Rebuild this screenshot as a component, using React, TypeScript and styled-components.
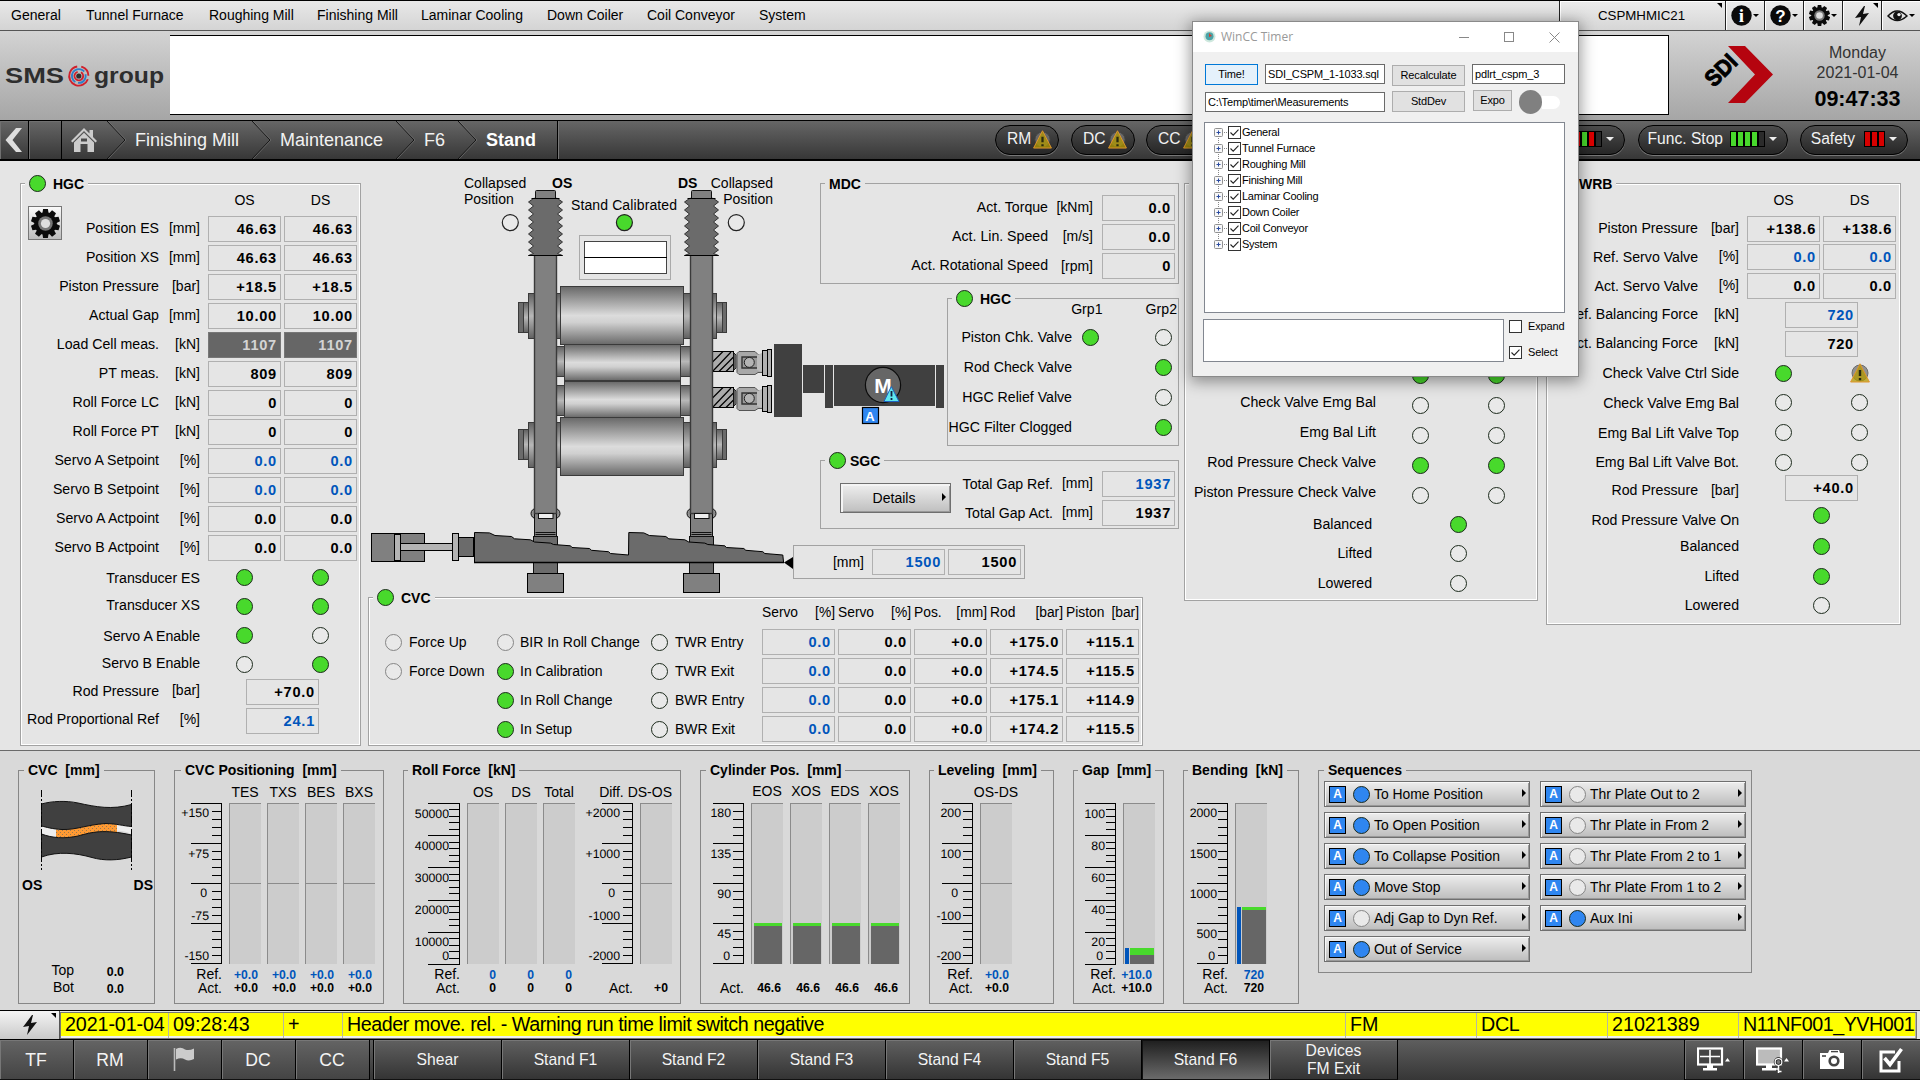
import React from "react";
import styled, { createGlobalStyle, css } from "styled-components";

const FONT = '"Liberation Sans", Arial, sans-serif';
const GREEN = "#48d92c";
const BLUE = "#0055bb";
const SKY = "#2f86f0";
const BG = "#e5e5e5";
const BG_LOW = "#d9d9d9";

const Global = createGlobalStyle`
  * { box-sizing: border-box; }
  body { margin: 0; background: ${BG}; }
  svg { display: block; flex: none; }
`;

const Screen = styled.div`
  position: relative;
  width: 1920px;
  height: 1080px;
  overflow: hidden;
  display: flex;
  flex-direction: column;
  font: 14px/16px ${FONT};
  color: #000;
  white-space: pre;
  background: ${BG};
`;

/* ---------- top menu ---------- */
const MenuBar = styled.nav`
  height: 31px;
  flex: none;
  display: flex;
  border-top: 1px solid #000;
  border-bottom: 1px solid #555;
  background: linear-gradient(#e8e8e8, #d4d4d4);
`;
const MenuItems = styled.div`
  width: 1559px;
  display: flex;
  align-items: center;
  padding: 0 0 1px 11px;
`;
const MenuItem = styled.span<{ w: number }>`
  width: ${(p) => p.w}px;
  flex: none;
`;
const MenuCell = styled.div<{ w: number }>`
  width: ${(p) => p.w}px;
  flex: none;
  display: flex;
  align-items: center;
  justify-content: center;
  border-left: 1px solid #222;
  box-shadow: inset 1px 1px 0 #fff;
  background: linear-gradient(#ececec, #d6d6d6);
  font-size: 13.3px;
`;
const Host = styled.span`
  flex: 1;
  text-align: center;
  padding-left: 6px;
`;
const Side = styled.span`
  flex: 1 1 0;
  align-self: stretch;
  display: flex;
  justify-content: flex-end;
`;
const Corner = styled.i`
  align-self: flex-start;
  margin: 2px 3px 0 0;
  border-top: 5px solid #000;
  border-left: 5px solid transparent;
`;

/* ---------- header ---------- */
const Header = styled.header`
  height: 89px;
  flex: none;
  display: flex;
  background: linear-gradient(#d3d3d3, #a6a6a6);
`;
const LogoBox = styled.div`
  width: 170px;
`;
const Banner = styled.div`
  width: 1499px;
  height: 80px;
  margin-top: 4px;
  background: #fff;
  border: solid #000;
  border-width: 1px 1px 1px 0;
`;
const Sdi = styled.div`
  width: 128px;
`;
const Clock = styled.div`
  width: 121px;
  display: flex;
  flex-direction: column;
  align-items: center;
  padding-top: 12px;
  font-size: 16px;
  line-height: 20px;
  color: #333;
`;
const Time = styled.b`
  font-size: 21.5px;
  line-height: 32px;
  color: #000;
`;

/* ---------- breadcrumb ---------- */
const Crumbs = styled.div`
  height: 41px;
  flex: none;
  display: flex;
  border-top: 1px solid #000;
  border-bottom: 2px solid #000;
  background: linear-gradient(#666, #373737);
  color: #f2f2f2;
`;
const Back = styled.div<{ w: number }>`
  width: ${(p) => p.w}px;
  border-right: 1px solid #000;
  box-shadow: inset 1px 1px 0 #707070;
  display: flex;
  align-items: center;
  justify-content: center;
`;
const Crumb = styled.div<{ w: number; pad: number; strong?: boolean }>`
  width: ${(p) => p.w}px;
  flex: none;
  padding-left: ${(p) => p.pad}px;
  display: flex;
  align-items: center;
  font-size: 18px;
  font-weight: ${(p) => (p.strong ? 700 : 400)};
  ${(p) => p.strong && css`border-right: 1px solid #000; box-shadow: 1px 0 0 #777; color: #fff;`}
`;
const Pills = styled.div`
  flex: 1;
  display: flex;
  align-items: center;
  margin-left: 437px;
`;
const Pill = styled.div<{ w: number; gap: number; end?: boolean }>`
  width: ${(p) => p.w}px;
  height: 30px;
  margin-right: ${(p) => p.gap}px;
  flex: none;
  display: flex;
  align-items: center;
  justify-content: ${(p) => (p.end ? "flex-end" : "flex-start")};
  padding: 0 10px 2px 11px;
  border: 1px solid #000;
  border-radius: 15px;
  box-shadow: 0 1px 0 #777;
  background: linear-gradient(#4c4c4c, #262626);
  font-size: 15.6px;
`;
const Segs = styled.div<{ ml?: number }>`
  display: flex;
  gap: 2px;
  margin: 0 4px 0 ${(p) => p.ml ?? 8}px;
`;
const Seg = styled.i<{ c: string }>`
  width: 5px;
  height: 14px;
  background: ${(p) => p.c};
  outline: 1px solid #000;
`;
const Down = styled.i<{ c?: string; s?: number }>`
  border: ${(p) => p.s ?? 4}px solid transparent;
  border-top-color: ${(p) => p.c ?? "#000"};
  border-bottom: 0;
  margin-left: 1px;
`;

/* ---------- generic parts ---------- */
const Panel = styled.fieldset<{ w: number; h: number; ml?: number; mt?: number; lit?: boolean; low?: boolean }>`
  width: ${(p) => p.w}px;
  height: ${(p) => p.h}px;
  margin: ${(p) => p.mt ?? 0}px 0 0 ${(p) => p.ml ?? 0}px;
  padding: 0;
  min-width: 0;
  flex: none;
  border: 1px solid ${(p) => (p.low ? "#878787" : "#a2a2a2")};
  ${(p) => p.lit && css`box-shadow: inset 0 0 0 1px #fff;`}
`;
const Legend = styled.legend<{ low?: boolean; ml?: number; gap?: number }>`
  display: flex;
  align-items: center;
  height: 17px;
  margin-left: ${(p) => p.ml ?? 4}px;
  padding: 0 4px ${(p) => (p.low ? 2 : 0)}px;
  gap: ${(p) => p.gap ?? 7}px;
  font-weight: 700;
  background: ${(p) => (p.low ? BG_LOW : BG)};
`;
const Lamp = styled.i<{ on?: boolean; dim?: boolean; c?: string }>`
  width: 17px;
  height: 17px;
  flex: none;
  border-radius: 50%;
  border: 1.4px solid ${(p) => (p.dim ? "#858585" : "#1c2a1c")};
  background: ${(p) => (p.on ? p.c ?? GREEN : "#e9e9e9")};
`;
const Body = styled.div<{ pt?: number; pr?: number }>`
  padding: ${(p) => p.pt ?? 0}px ${(p) => p.pr ?? 3}px 0 0;
`;
const Row = styled.div<{ h?: number; pb?: number }>`
  height: ${(p) => p.h ?? 29}px;
  padding-bottom: ${(p) => p.pb ?? 3}px;
  display: flex;
  align-items: center;
  justify-content: flex-end;
`;
const Label = styled.span<{ up?: number; mr?: number }>`
  margin-bottom: ${(p) => p.up ?? 3}px;
  margin-right: ${(p) => p.mr ?? 0}px;
  font-size: 14.15px;
`;
const Unit = styled.span<{ w?: number; up?: number }>`
  width: ${(p) => p.w ?? 41}px;
  margin-bottom: ${(p) => p.up ?? 3}px;
  text-align: right;
`;
const Cells = styled.div<{ w?: number; ml?: number; gap?: number }>`
  width: ${(p) => p.w ?? 149}px;
  margin-left: ${(p) => p.ml ?? 8}px;
  flex: none;
  display: flex;
  align-items: center;
  justify-content: center;
  gap: ${(p) => p.gap ?? 3}px;
`;
const Slot = styled.span`
  width: 73px;
  flex: none;
  display: flex;
  justify-content: center;
`;
const Value = styled.span<{ tone?: string }>`
  width: 73px;
  height: 26px;
  flex: none;
  display: flex;
  align-items: center;
  justify-content: flex-end;
  padding-right: 3px;
  border: 1px solid ${(p) => (p.tone === "dark" ? "#777" : "#b0b0b0")};
  background: ${(p) => (p.tone === "dark" ? "#666" : "transparent")};
  color: ${(p) => (p.tone === "dark" ? "#d4d4d4" : p.tone === "ref" ? BLUE : "#000")};
  font-weight: 700;
  font-size: 14.6px;
  letter-spacing: 0.75px;
`;
const Head = styled.div<{ h?: number }>`
  height: ${(p) => p.h ?? 24}px;
  padding-bottom: 8px;
  display: flex;
  align-items: center;
  justify-content: flex-end;
`;

/* ---------- main area ---------- */
const Main = styled.main`
  height: 589px;
  flex: none;
  display: flex;
  align-items: flex-start;
  padding: 14px 0 0 20px;
`;
const Middle = styled.section`
  width: 811px;
  margin-left: 7px;
  flex: none;
`;
const MillRow = styled.div`
  display: flex;
  height: 414px;
`;
const RightStack = styled.div`
  width: 405px;
  flex: none;
`;
const Split = styled.div<{ mt?: number }>`
  display: flex;
  margin-top: ${(p) => p.mt ?? 0}px;
`;
const Grow = styled.div`
  flex: 1;
`;
const IconButton = styled.div`
  width: 34px;
  height: 34px;
  margin: 14px 0 0 7px;
  display: flex;
  align-items: center;
  justify-content: center;
  border: 1px solid #777;
  background: linear-gradient(#fafafa, #bdbdbd);
`;
const DetailsBtn = styled.div`
  width: 111px;
  height: 30px;
  margin: 14px 0 0 19px;
  padding: 0 4px 0 0;
  display: flex;
  align-items: center;
  border: 1px solid #6f6f6f;
  box-shadow: inset 2px 2px 0 #f4f4f4, inset -1px -1px 0 #999;
  background: linear-gradient(#efefef, #bfbfbf);
`;
const BtnText = styled.span`
  flex: 1;
  text-align: center;
  padding-left: 5px;
`;
const ArrowRight = styled.i`
  border: 4px solid transparent;
  border-left: 4px solid #000;
  border-right: 0;
  margin-bottom: 2px;
`;
const GapBox = styled.div`
  width: 232px;
  height: 34px;
  margin: 16px 0 0 19px;
  padding-right: 3px;
  display: flex;
  align-items: center;
  justify-content: flex-end;
  border: 1px solid #a2a2a2;
`;
const CvcCols = styled.div`
  display: flex;
  padding-right: 3px;
`;
const CvcCol = styled.div<{ w: number; pl: number }>`
  width: ${(p) => p.w}px;
  padding: 23px 0 0 ${(p) => p.pl}px;
  flex: none;
`;
const LampRow = styled.div<{ g?: number }>`
  height: 29px;
  padding-bottom: 3px;
  display: flex;
  align-items: center;
  gap: ${(p) => p.g ?? 7}px;
`;
const CvcTable = styled.div`
  display: grid;
  grid-template-columns: repeat(5, 73px);
  grid-template-rows: 23px;
  grid-auto-rows: 29px;
  column-gap: 3px;
`;
const ColHead = styled.div`
  display: flex;
  justify-content: space-between;
  font-size: 13.8px;
  line-height: 14px;
`;

/* ---------- lower area ---------- */
const Lower = styled.section`
  height: 260px;
  flex: none;
  display: flex;
  align-items: flex-start;
  padding: 11px 0 0 18px;
  border-top: 1px solid #6b6b6b;
  background: ${BG_LOW};
`;
const Gauge = styled.div`
  display: flex;
`;
const GaugeCol = styled.div<{ w: number; ml?: number }>`
  width: ${(p) => p.w}px;
  margin-left: ${(p) => p.ml ?? 0}px;
  flex: none;
  display: flex;
  flex-direction: column;
`;
const GaugeHead = styled.div<{ end?: boolean; up?: number }>`
  height: 24px;
  padding-top: ${(p) => 5 - (p.up ?? 0)}px;
  display: flex;
  justify-content: ${(p) => (p.end ? "flex-end" : "center")};
`;
const Track = styled.div`
  height: 161px;
  display: flex;
  align-items: flex-end;
  border-left: 1px solid #8b8b8b;
  border-top: 1px solid #8b8b8b;
  background: #ccc;
`;
const ZeroTrack = styled(Track)`
  background: linear-gradient(#8b8b8b, #8b8b8b) 0 79px / 100% 1px no-repeat #ccc;
`;
const Fill = styled.i<{ cap: number; ml: number; w: number }>`
  width: ${(p) => p.w}px;
  margin-left: ${(p) => p.ml}px;
  background: #666;
  border-top: ${(p) => p.cap}px solid ${GREEN};
`;
const RefFill = styled.i`
  width: 4px;
  margin-left: 1px;
  background: ${BLUE};
`;
const Foot = styled.div<{ b?: boolean; c?: string; first?: boolean; pr?: number }>`
  height: ${(p) => (p.first ? 17 : 14)}px;
  padding: ${(p) => (p.first ? (p.b ? 4 : 3) : 0)}px ${(p) => p.pr ?? 0}px 0 0;
  display: flex;
  align-items: center;
  justify-content: flex-end;
  font-size: ${(p) => (p.b ? 12.2 : 14)}px;
  font-weight: ${(p) => (p.b ? 700 : 400)};
  color: ${(p) => p.c ?? "#000"};
`;
const CvcSides = styled.div`
  display: flex;
  justify-content: space-between;
  margin: 7px 1px 0 3px;
  font-weight: 700;
`;
const CvcVals = styled.div`
  width: 105px;
  margin-top: 70px;
  display: grid;
  grid-template-columns: 55px 50px;
  line-height: 15px;
  text-align: right;
`;
const Small = styled.b`
  font-size: 12.4px;
  padding-top: 2px;
`;
const SeqGrid = styled.div`
  display: grid;
  grid-auto-flow: column;
  grid-template-rows: repeat(6, 26px);
  grid-template-columns: 206px 206px;
  gap: 5px 10px;
  padding: 2px 0 0 5px;
`;
const SeqBtn = styled.div`
  display: flex;
  align-items: center;
  padding: 0 3px 0 4px;
  border: 1px solid #6f6f6f;
  box-shadow: inset 1px 1px 0 #f8f8f8, inset -1px -1px 0 #999;
  background: linear-gradient(#ededed, #bdbdbd);
`;
const Auto = styled.b`
  width: 17px;
  height: 17px;
  flex: none;
  display: flex;
  align-items: center;
  justify-content: center;
  margin-right: 7px;
  border: 1px solid #000;
  background: ${SKY};
  color: #fff;
  font-size: 12px;
`;
const SeqText = styled.span`
  flex: 1;
  padding-left: 4px;
  font-size: 13.9px;
`;

/* ---------- alarm line and bottom bar ---------- */
const Alarm = styled.div`
  height: 30px;
  flex: none;
  display: flex;
  border-top: 1px solid #000;
  border-bottom: 1px solid #000;
  background: #e4e4e4;
`;
const AlarmBtn = styled.div`
  width: 60px;
  display: flex;
  align-items: center;
  justify-content: center;
  border-right: 1px solid #555;
  background: linear-gradient(#f4f4f4, #c9c9c9);
`;
const AlarmLine = styled.div`
  width: 1857px;
  height: 27px;
  margin-top: 1px;
  display: flex;
  border: 1px solid #777;
  background: linear-gradient(#ff0 0 23px, #eee 23px);
`;
const AlarmCell = styled.span<{ w: number; tight?: number }>`
  width: ${(p) => p.w}px;
  flex: none;
  padding-left: 4px;
  border-right: 1px solid #b8b8a0;
  font-size: 19.7px;
  line-height: 23px;
  letter-spacing: -${(p) => p.tight ?? 0}px;
`;
const BottomBar = styled.nav`
  height: 40px;
  flex: none;
  display: flex;
  background: linear-gradient(#5e5e5e, #363636);
  color: #f4f4f4;
`;
const BarBtn = styled.div<{ w: number; active?: boolean; big?: boolean }>`
  width: ${(p) => p.w}px;
  flex: none;
  display: flex;
  align-items: center;
  justify-content: center;
  text-align: center;
  padding-right: ${(p) => (p.big ? 1 : 0)}px;
  line-height: 18px;
  font-size: ${(p) => (p.big ? 17.6 : 15.7)}px;
  border-right: 1px solid #000;
  border-bottom: 1px solid #111;
  box-shadow: inset 1px 1px 0 ${(p) => (p.active ? "#111" : "#777")};
  background: ${(p) =>
    p.active ? "linear-gradient(#1e1e1e, #6a6a6a)" : p.big ? "linear-gradient(#646464, #444)" : "linear-gradient(#606060, #343434)"};
`;
const BarGap = styled.div<{ w: number }>`
  width: ${(p) => p.w}px;
  flex: none;
  border-right: 1px solid #000;
`;

/* ---------- timer window ---------- */
const Win = styled.div`
  position: absolute;
  left: 1192px;
  top: 21px;
  width: 387px;
  height: 356px;
  border: 1px solid #8a8a8a;
  background: #f0f0f0;
  box-shadow: 0 3px 14px 2px rgba(0, 0, 0, 0.38);
  font-size: 11px;
  line-height: 13px;
  letter-spacing: -0.15px;
`;
const WinTitle = styled.div`
  height: 30px;
  padding: 0 18px 1px 10px;
  display: flex;
  align-items: center;
  background: #fff;
  color: #999;
  font-family: "Open Sans", "Noto Sans", sans-serif;
  font-size: 12px;
  letter-spacing: 0;
`;
const WinName = styled.span`
  flex: 1;
  padding-left: 5px;
`;
const WinRow = styled.div<{ mt: number }>`
  display: flex;
  align-items: flex-start;
  margin: ${(p) => p.mt}px 0 0 12px;
`;
const WinBtn = styled.span<{ w: number; ml?: number; mt?: number; hot?: boolean }>`
  width: ${(p) => p.w}px;
  height: 21px;
  margin: ${(p) => p.mt ?? 0}px 0 0 ${(p) => p.ml ?? 0}px;
  display: flex;
  align-items: center;
  justify-content: center;
  border: 1px solid ${(p) => (p.hot ? "#0078d7" : "#adadad")};
  background: ${(p) => (p.hot ? "#e5f1fb" : "#e1e1e1")};
`;
const WinInput = styled.span<{ w: number; ml?: number; mt?: number }>`
  width: ${(p) => p.w}px;
  height: 20px;
  margin: ${(p) => p.mt ?? 0}px 0 0 ${(p) => p.ml ?? 0}px;
  padding: 3px 0 0 2px;
  overflow: hidden;
  border: 1px solid #6a6a6a;
  background: #fff;
`;
const Toggle = styled.span`
  width: 41px;
  height: 24px;
  margin: 0 0 0 7px;
  display: flex;
  align-items: center;
`;
const Knob = styled.i`
  width: 24px;
  height: 24px;
  border-radius: 50%;
  background: #808080;
`;
const Rail = styled.i`
  width: 18px;
  height: 13px;
  border-radius: 0 7px 7px 0;
  background: #fff;
`;
const Tree = styled.div`
  width: 361px;
  height: 191px;
  margin: 8px 0 0 11px;
  padding: 1px 0 0 8px;
  border: 1px solid #828790;
  background: #fff;
`;
const TreeRow = styled.div`
  height: 16px;
  display: flex;
  align-items: center;
`;
const TreeText = styled.span`
  padding-left: 1px;
  letter-spacing: -0.25px;
`;
const WinFoot = styled.div`
  display: flex;
  margin: 6px 0 0 10px;
`;
const Output = styled.div`
  width: 301px;
  height: 43px;
  border: 1px solid #828790;
  background: #fff;
`;
const Checks = styled.div`
  display: flex;
  flex-direction: column;
  gap: 13px;
  padding: 1px 0 0 5px;
`;
const CheckRow = styled.div`
  height: 13px;
  display: flex;
  align-items: center;
  gap: 6px;
`;

/* ---------- icons ---------- */
const Bolt = () => (
  <svg width="18" height="22" viewBox="0 0 18 22">
    <path d="M11 1 2 13 8 12 6 21 16 8 10 9 12 1Z" fill="#111" />
  </svg>
);
const Gear = ({ s }: { s: number }) => (
  <svg width={s} height={s} viewBox="-12 -12 24 24">
    {Array.from({ length: 10 }, (_, i) => (
      <path key={i} d="M-2.7 -7.5 -2 -12H2L2.7 -7.5Z" fill="#0b0b0b" transform={`rotate(${i * 36})`} />
    ))}
    <circle r="9.3" fill="#0b0b0b" />
    <circle r="6" fill="#777" />
    <circle r="3.8" fill="#dedede" />
  </svg>
);
const Round = ({ t }: { t: string }) => (
  <svg width="21" height="21" viewBox="0 0 21 21">
    <circle cx="10.5" cy="10.5" r="10.2" fill="#0a0a0a" />
    <text x="10.5" y="16.5" textAnchor="middle" fill="#fff" fontFamily={t === "i" ? '"Liberation Serif", serif' : FONT} fontWeight="700" fontSize={t === "i" ? 19 : 17}>
      {t}
    </text>
  </svg>
);
const Eye = () => (
  <svg width="21" height="14" viewBox="0 0 21 14">
    <path d="M1 7Q10 -3 20 7 10 16 1 7Z" fill="none" stroke="#111" strokeWidth="1.5" />
    <circle cx="10.5" cy="6.8" r="4.4" fill="#111" />
    <circle cx="12" cy="5.6" r="1.7" fill="#eee" />
  </svg>
);
const Warn = ({ size = 20 }: { size?: number }) => (
  <svg width={size} height={size} viewBox="0 0 20 20">
    <circle cx="10" cy="10" r="8" fill="#777" stroke="#444" opacity="0.75" />
    <path d="M10 .8 19.4 19H.6Z" fill="#b39a00" fillOpacity="0.75" stroke="#e0962c" strokeWidth="1" />
    <path d="M10 7v6M10 15v2.2" stroke="#2a2a10" strokeWidth="2.4" />
  </svg>
);
const Check = ({ on }: { on?: boolean }) => (
  <svg width="13" height="13" viewBox="0 0 13 13">
    <rect x=".5" y=".5" width="12" height="12" fill="#fff" stroke="#333" />
    {on && <path d="M2.5 6.5 5.2 9.2 10.5 3.6" fill="none" stroke="#222" strokeWidth="1.1" />}
  </svg>
);
const Node = ({ first, last }: { first: boolean; last: boolean }) => (
  <svg width="15" height="16" viewBox="0 0 15 16">
    <path d={`M5.5 ${first ? 8 : 0}V${last ? 8 : 16}M9 8.5H15`} stroke="#888" strokeDasharray="1 1" fill="none" />
    <rect x="1.5" y="4.5" width="8" height="8" fill="#f8f8f8" stroke="#919191" rx="1" />
    <path d="M3.5 8.5h4M5.5 6.5v4" stroke="#2a4ba0" />
  </svg>
);
const Chevron = () => (
  <svg width="19" height="38" viewBox="0 0 19 38">
    <path d="M0 0 18 19 0 38" fill="none" stroke="#151515" strokeWidth="1" />
    <path d="M1.2 0 19 19 1.2 38" fill="none" stroke="#7a7a7a" strokeWidth=".6" />
  </svg>
);
const Monitor = ({ split }: { split?: boolean }) => (
  <svg width="34" height="26" viewBox="0 0 34 26">
    <rect x="1" y="1.5" width="24" height="16" fill={split ? "#444" : "#bbb"} stroke="#fff" strokeWidth="2.2" />
    {split && <path d="M13 3v14M3 9.5h20" stroke="#fff" strokeWidth="1.6" />}
    <path d="M10 18h6v3h4v2.5H6V21h4Z" fill="#fff" />
    <path d="M28 14.5 30.5 11 33 14.5Z" fill="#fff" />
    {!split && (
      <g>
        <circle cx="22.5" cy="15" r="3.4" fill="#777" stroke="#111" strokeWidth="2.6" />
        <circle cx="22.5" cy="15" r="3.4" fill="none" stroke="#fff" strokeWidth="1.3" />
        <path d="M22.5 18.4V26M22.5 22h-3M22.5 24.5h3" stroke="#fff" strokeWidth="1.5" />
      </g>
    )}
  </svg>
);
const Camera = () => (
  <svg width="26" height="21" viewBox="0 0 26 21">
    <path d="M1 4H9L10.5 1H20L21 4H25V20H1Z" fill="#fff" />
    <path d="M12 2.6h7" stroke="#444" strokeWidth="1.4" />
    <circle cx="15" cy="12" r="5.6" fill="#444" />
    <circle cx="15" cy="12" r="3" fill="#fff" />
    <path d="M3 7h4" stroke="#444" strokeWidth="1.6" />
  </svg>
);
const TaskCheck = () => (
  <svg width="26" height="26" viewBox="0 0 26 26">
    <path d="M17 5H3V24H21V14" fill="none" stroke="#fff" strokeWidth="3" />
    <path d="M6.5 11 12 17.5 23.5 2" fill="none" stroke="#fff" strokeWidth="3.6" />
  </svg>
);

/* ---------- mill drawing ---------- */
const Stroke = { stroke: "#3a3a3a", strokeWidth: 1 };

const Roll = ({ y, h, x = 560, w = 124, neck, stub }: { y: number; h: number; x?: number; w?: number; neck: [number, number]; stub?: [number, number] }) => (
  <g {...Stroke}>
    {stub && (
      <>
        <rect x="518.5" y={stub[0]} width="208" height={stub[1]} fill="url(#neck)" />
        <rect x="518.5" y={stub[0]} width="5" height={stub[1]} fill="#6b6b6b" />
        <rect x="722.5" y={stub[0]} width="4" height={stub[1]} fill="#6b6b6b" />
      </>
    )}
    <rect x={stub ? 528.5 : 556.5} y={neck[0]} width={stub ? 188 : 134} height={neck[1]} fill="url(#neck)" />
    <rect x={x + 0.5} y={y} width={w - 1} height={h} fill="url(#roll)" />
  </g>
);

const teeth = (x: number) => {
  let d = `M${x - 1} 198.5L${x - 6} 202`;
  for (let i = 0; i < 6; i++) d += `L${x - 1} ${206 + i * 8}L${x - 6} ${210 + i * 8}`;
  d += `L${x - 1} 253.5L${x - 6} 255.5H${x + 28}L${x + 23} 253.5`;
  for (let i = 5; i >= 0; i--) d += `L${x + 28} ${210 + i * 8}L${x + 23} ${206 + i * 8}`;
  return d + `L${x + 28} 202L${x + 23} 198.5Z`;
};

const Post = ({ x }: { x: number }) => (
  <g stroke="#111" strokeWidth="1">
    <circle cx={x + 1.5} cy="513.5" r="5" fill="#909090" />
    <circle cx={x + 20.5} cy="513.5" r="5" fill="#909090" />
    <rect x={x - 1} y="536.5" width="24" height="37" fill="#6b6b6b" />
    <rect x={x} y="513.5" width="22" height="23" fill="#808080" />
    <rect x={x} y="198.5" width="22" height="315" fill="#808080" stroke="#3a3a3a" strokeWidth="1.4" />
    <rect x={x + 4} y="513.5" width="14.5" height="5" fill="#eee" />
    <path d={`M${x + 1} 532.5h20M${x + 1} 534.5h20`} />
    <rect x={x + 1} y="190.5" width="20" height="9" rx="1" fill="#808080" />
    <path d={teeth(x)} fill="#6b6b6b" stroke="#333" />
    <path d={`M${x - 3} 198.5h28M${x - 6} 255.5h34`} stroke="#000" />
    <rect x={x - 7} y="573.5" width="36" height="19" fill="#808080" stroke="#000" />
  </g>
);

const wedge = (x: number) =>
  [[0, 0], [15, 0.4], [20.5, 3], [37, 4], [40, 6.3], [56, 7.3], [60, 9.5], [76, 10.6], [79, 12], [96, 13.3], [97.5, 15], [115, 16], [117, 17.8], [134, 19.2], [136, 21], [154, 22.5]]
    .map(([a, b]) => `L${x + a} ${532.5 + b}`)
    .join("");

const Spindle = ({ y }: { y: number }) => (
  <g transform={`translate(0 ${y})`} stroke="#222">
    <rect x="712.5" y="351.5" width="21" height="20" fill="#ababab" stroke="#000" />
    <path d="M712.5 362 723 351.5M712.5 371.5 731 352M719 371.5 733.5 357M726 371.5 733.5 364" stroke="#000" strokeWidth="1.2" />
    <path d="M734 353v17l2-2v-13Z" fill="#999" />
    <path d="M739 351.5h16l3 3h4v18h-4l-3 2h-16l-2-2v-19Z" fill="#a8a8a8" stroke="#555" />
    <path d="M757 357h-15v11h15" fill="#999" stroke="#333" strokeWidth="1.4" />
    <circle cx="749.3" cy="362.4" r="5" fill="#b4b4b4" />
    <path d="M757 355l5-2v19l-5-2Z" fill="#bbb" stroke="none" />
    <rect x="762.5" y="350.5" width="5" height="25" fill="#b0b0b0" stroke="#000" />
    <rect x="767.5" y="349.5" width="4" height="27" fill="#b0b0b0" stroke="#000" />
  </g>
);

const Mill = () => (
  <svg width="406" height="413" viewBox="368 175 406 413" overflow="visible" fontFamily={FONT} fontSize="14">
    <defs>
      <linearGradient id="roll" x2="0" y2="1">
        <stop offset="0" stopColor="#686868" />
        <stop offset=".15" stopColor="#8a8a8a" />
        <stop offset=".5" stopColor="#dcdcdc" />
        <stop offset=".62" stopColor="#d0d0d0" />
        <stop offset="1" stopColor="#686868" />
      </linearGradient>
      <linearGradient id="neck" x2="0" y2="1">
        <stop offset="0" stopColor="#606060" />
        <stop offset=".5" stopColor="#b8b8b8" />
        <stop offset="1" stopColor="#606060" />
      </linearGradient>
    </defs>
    <text x="464" y="188">Collapsed</text>
    <text x="464" y="204">Position</text>
    <text x="773" y="188" textAnchor="end">Collapsed</text>
    <text x="773" y="204" textAnchor="end">Position</text>
    <text x="552" y="188" fontWeight="700">OS</text>
    <text x="678" y="188" fontWeight="700">DS</text>
    <text x="571" y="210" textLength="106">Stand Calibrated</text>
    <g stroke="#222" strokeWidth="1.2" fill="#e9e9e9">
      <circle cx="510.3" cy="222.6" r="8" />
      <circle cx="736.3" cy="222.6" r="8" />
      <circle cx="624.4" cy="222.6" r="8" fill={GREEN} />
    </g>
    <rect x="579.5" y="235.5" width="91" height="44" fill="none" stroke="#aaa" />
    <rect x="584.5" y="241.5" width="82" height="32" fill="#fff" stroke="#444" />
    <path d="M584 257.5h83" stroke="#000" />
    <Roll y={286.5} h={58} neck={[293.5, 45]} stub={[302.5, 30]} />
    <Roll y={344.5} h={36} x={564} w={117} neck={[346.5, 30]} />
    <Roll y={381.5} h={36} x={564} w={117} neck={[385.5, 30]} />
    <Roll y={417.5} h={58} neck={[422.5, 45]} stub={[429.5, 30]} />
    <Spindle y={0} />
    <Spindle y={36} />
    <Post x={534.5} />
    <Post x={690.5} />
    <path d={`M474.5 562.5${wedge(474.5)}${wedge(628.8)}L783.6 562.5Z`} fill="#6b6b6b" stroke="#000" />
    <path d="M474 562.5h310" stroke="#000" strokeWidth="1.4" />
    <path d="M784 562.5 793 557v12Z" fill="#000" />
    <g stroke="#000">
      <rect x="371.5" y="533.5" width="53" height="28" fill="#808080" />
      <rect x="400.5" y="543.5" width="52" height="7" fill="#b4b4b4" />
      <rect x="394.5" y="534.5" width="6" height="26" fill="#b4b4b4" />
      <rect x="452.5" y="533.5" width="6" height="27" fill="#b4b4b4" />
      <rect x="458.5" y="537.5" width="15" height="19" fill="#6b6b6b" />
    </g>
  </svg>
);

const Drive = () => (
  <svg width="173" height="156" viewBox="774 290 173 156" fontFamily={FONT} fontWeight="700">
    <g fill="#404040">
      <rect x="774" y="344" width="28" height="73" />
      <rect x="803" y="365" width="21" height="28" />
      <rect x="825" y="365" width="8" height="43" />
      <rect x="834" y="365" width="101" height="41" />
      <rect x="936" y="365" width="8" height="43" />
    </g>
    <circle cx="883" cy="385" r="17.6" fill="#666" stroke="#0c0c0c" strokeWidth="1.2" />
    <text x="883" y="392.5" textAnchor="middle" fontSize="21" fill="#fff">M</text>
    <path d="M891.3 386.5 899 401.5H884Z" fill="#5ee6ee" stroke="#1d62c0" />
    <path d="M891.5 391v5.5M891.5 398v2" stroke="#124" strokeWidth="1.8" />
    <rect x="862.5" y="407.5" width="16" height="16" fill={SKY} stroke="#000" strokeWidth="1.2" />
    <text x="870" y="420.5" textAnchor="middle" fontSize="13" fill="#fff">A</text>
  </svg>
);

/* ---------- composed parts ---------- */
type Cell = string | boolean | "warn";
const cellsOf = (v: Cell[], tone?: string) =>
  v.map((c, i) =>
    typeof c === "string" && c !== "warn" ? (
      <Value key={i} tone={tone}>{c}</Value>
    ) : (
      <Slot key={i}>{c === "warn" ? <Warn size={20} /> : <Lamp on={c as boolean} />}</Slot>
    )
  );

interface LineProps { label: string; unit?: string; v: Cell[]; tone?: string; h?: number; uw?: number; cw?: number; ml?: number; up?: number; uup?: number; pb?: number }
const Line = ({ label, unit, v, tone, h, uw, cw, ml, up, uup, pb }: LineProps) => (
  <Row h={h} pb={pb}>
    <Label up={up}>{label}</Label>
    {unit && <Unit w={uw} up={uup}>{unit}</Unit>}
    <Cells w={cw} ml={ml}>{cellsOf(v, tone)}</Cells>
  </Row>
);
const SideHeads = () => (
  <Head>
    <Cells><Slot>OS</Slot><Slot>DS</Slot></Cells>
  </Head>
);

const hgcLines: LineProps[] = [
  { label: "Piston Pressure", unit: "[bar]", v: ["+18.5", "+18.5"] },
  { label: "Actual Gap", unit: "[mm]", v: ["10.00", "10.00"] },
  { label: "Load Cell meas.", unit: "[kN]", v: ["1107", "1107"], tone: "dark" },
  { label: "PT meas.", unit: "[kN]", v: ["809", "809"] },
  { label: "Roll Force LC", unit: "[kN]", v: ["0", "0"] },
  { label: "Roll Force PT", unit: "[kN]", v: ["0", "0"] },
  { label: "Servo A Setpoint", unit: "[%]", v: ["0.0", "0.0"], tone: "ref" },
  { label: "Servo B Setpoint", unit: "[%]", v: ["0.0", "0.0"], tone: "ref" },
  { label: "Servo A Actpoint", unit: "[%]", v: ["0.0", "0.0"] },
  { label: "Servo B Actpoint", unit: "[%]", v: ["0.0", "0.0"] },
  { label: "Transducer ES", v: [true, true], up: 0, pb: 2 },
  { label: "Transducer XS", v: [true, true], up: 4, pb: 2 },
  { label: "Servo A Enable", v: [true, false], up: -1 },
  { label: "Servo B Enable", v: [false, true], up: 2 },
  { label: "Rod Pressure", unit: "[bar]", v: ["+70.0"], pb: 5, up: 2, uup: 5 },
  { label: "Rod Proportional Ref", unit: "[%]", v: ["24.1"], tone: "ref", pb: 5, up: 4, uup: 5 },
];

const balLines: LineProps[] = [
  { label: "Check Valve Ctrl Side", v: [true, true] },
  { label: "Check Valve Emg Bal", v: [false, false] },
  { label: "Emg Bal Lift", v: [false, false] },
  { label: "Rod Pressure Check Valve", v: [true, true] },
  { label: "Piston Pressure Check Valve", v: [false, false] },
];

const wrbLines: LineProps[] = [
  { label: "Piston Pressure", unit: "[bar]", v: ["+138.6", "+138.6"], h: 28, pb: 2 },
  { label: "Ref. Servo Valve", unit: "[%]", v: ["0.0", "0.0"], tone: "ref", up: 1, uup: 2 },
  { label: "Act. Servo Valve", unit: "[%]", v: ["0.0", "0.0"], up: 1, uup: 2 },
  { label: "Ref. Balancing Force", unit: "[kN]", v: ["720"], tone: "ref" },
  { label: "Act. Balancing Force", unit: "[kN]", v: ["720"] },
  { label: "Check Valve Ctrl Side", v: [true, "warn"], h: 29, pb: 3, up: 1 },
  { label: "Check Valve Emg Bal", v: [false, false], h: 30, up: 0 },
  { label: "Emg Bal Lift Valve Top", v: [false, false], h: 30, up: 0 },
  { label: "Emg Bal Lift Valve Bot.", v: [false, false], h: 26, pb: 0, up: 0 },
];

interface ScaleProps { five?: boolean; labels: [number, string, number?][]; w?: number; minor?: number; gap?: number }
const Scale = ({ five, labels, w = 31, minor = 10, gap = 13 }: ScaleProps) => {
  const step = five ? 6.44 : 8;
  const n = five ? 25 : 20;
  return (
    <svg width={w} height="161" overflow="visible" shapeRendering="crispEdges" fontFamily={FONT} fontSize="12.3">
      <rect x={w - 1} y="0" width="1" height={Math.round(n * step) + 1} />
      {Array.from({ length: n + 1 }, (_, i) => {
        const len = i % 5 === 0 ? w : minor;
        return <rect key={i} x={w - len} y={Math.round(i * step)} width={len} height="1" />;
      })}
      {labels.map(([y, t, dx = 0]) => (
        <text key={t} x={w - gap - dx} y={y - 803 + 3.8} textAnchor="end" textRendering="geometricPrecision">{t}</text>
      ))}
    </svg>
  );
};

interface Bar { head?: string; ml: number; zero?: boolean; ref?: string; act: string; fill?: React.ReactNode; end?: boolean; pr?: number }
const Bars = ({ bars, up }: { bars: Bar[]; up?: number }) => (
  <>
    {bars.map((b, i) => {
      const T = b.zero ? ZeroTrack : Track;
      return (
        <GaugeCol key={i} w={32} ml={b.ml}>
          <GaugeHead end={b.end} up={up}>{b.head}</GaugeHead>
          <T>{b.fill}</T>
          <Foot first b c={BLUE} pr={b.pr ?? 3}>{b.ref}</Foot>
          <Foot b pr={b.pr ?? 3}>{b.act}</Foot>
        </GaugeCol>
      );
    })}
  </>
);
const ScaleCol = ({ ml, noRef, ...s }: ScaleProps & { ml: number; noRef?: boolean }) => (
  <GaugeCol w={s.w ?? 31} ml={ml}>
    <GaugeHead />
    <Scale {...s} />
    <Foot first>{noRef ? "" : "Ref."}</Foot>
    <Foot>Act.</Foot>
  </GaugeCol>
);
const LowPanel = ({ title, w, ml, h = 242, tl = 4, children }: { title: string; w: number; ml?: number; h?: number; tl?: number; children: React.ReactNode }) => (
  <Panel w={w} h={h} ml={ml} low>
    <Legend low ml={tl}>{title}</Legend>
    {children}
  </Panel>
);

const cylFill = <Fill w={28} ml={2} cap={3} style={{ height: 41 }} />;
const seqs: [string, boolean][] = [
  ["To Home Position", true], ["To Open Position", true], ["To Collapse Position", true], ["Move Stop", true],
  ["Adj Gap to Dyn Ref.", false], ["Out of Service", true], ["Thr Plate Out to 2", false], ["Thr Plate in From 2", false],
  ["Thr Plate From 2 to 1", false], ["Thr Plate From 1 to 2", false], ["Aux Ini", true],
];
const cvcRows = [
  ["0.0", "0.0", "+0.0", "+175.0", "+115.1"],
  ["0.0", "0.0", "+0.0", "+174.5", "+115.5"],
  ["0.0", "0.0", "+0.0", "+175.1", "+114.9"],
  ["0.0", "0.0", "+0.0", "+174.2", "+115.5"],
];
const treeItems = ["General", "Tunnel Furnace", "Roughing Mill", "Finishing Mill", "Laminar Cooling", "Down Coiler", "Coil Conveyor", "System"];

const TimerWindow = () => (
  <Win>
    <WinTitle>
      <svg width="13" height="13" viewBox="0 0 13 13">
        <circle cx="6.5" cy="6.5" r="6" fill="#cfe8de" />
        <circle cx="6.5" cy="6.3" r="4" fill="#4aa3a8" />
        <path d="M6 3l3 3-3 1Z" fill="#c43" />
      </svg>
      <WinName>WinCC Timer</WinName>
      <svg width="101" height="12" viewBox="0 0 101 12" fill="none" stroke="#888">
        <path d="M0 6.5h10M90.5 1.5l10 10M100.5 1.5l-10 10" />
        <rect x="45.5" y="1.5" width="9" height="9" />
      </svg>
    </WinTitle>
    <WinRow mt={12}>
      <WinBtn w={53} hot>Time!</WinBtn>
      <WinInput w={120} ml={7}>SDI_CSPM_1-1033.sql</WinInput>
      <WinBtn w={73} ml={7} mt={1}>Recalculate</WinBtn>
      <WinInput w={93} ml={7}>pdlrt_cspm_3</WinInput>
    </WinRow>
    <WinRow mt={4}>
      <WinInput w={180} mt={2}>C:\Temp\timer\Measurements</WinInput>
      <WinBtn w={73} ml={7} mt={1}>StdDev</WinBtn>
      <WinBtn w={39} ml={8}>Expo</WinBtn>
      <Toggle><Knob /><Rail /></Toggle>
    </WinRow>
    <Tree>
      {treeItems.map((t, i) => (
        <TreeRow key={t}>
          <Node first={i === 0} last={i === treeItems.length - 1} />
          <Check on />
          <TreeText>{t}</TreeText>
        </TreeRow>
      ))}
    </Tree>
    <WinFoot>
      <Output />
      <Checks>
        <CheckRow><Check />Expand</CheckRow>
        <CheckRow><Check on />Select</CheckRow>
      </Checks>
    </WinFoot>
  </Win>
);

export default function App() {
  return (
    <>
      <Global />
      <Screen>
        <MenuBar>
          <MenuItems>
            <MenuItem w={75}>General</MenuItem>
            <MenuItem w={123}>Tunnel Furnace</MenuItem>
            <MenuItem w={108}>Roughing Mill</MenuItem>
            <MenuItem w={104}>Finishing Mill</MenuItem>
            <MenuItem w={126}>Laminar Cooling</MenuItem>
            <MenuItem w={100}>Down Coiler</MenuItem>
            <MenuItem w={112}>Coil Conveyor</MenuItem>
            <MenuItem w={60}>System</MenuItem>
          </MenuItems>
          <MenuCell w={166}><Host>CSPMHMIC21</Host><Corner /></MenuCell>
          <MenuCell w={39}><Round t="i" /><Down s={3.5} /></MenuCell>
          <MenuCell w={39}><Round t="?" /><Down s={3.5} /></MenuCell>
          <MenuCell w={39}><Gear s={21} /><Down s={3.5} /></MenuCell>
          <MenuCell w={39}><Side /><Bolt /><Side><Corner /></Side></MenuCell>
          <MenuCell w={39}><Eye /><Down s={3.5} /></MenuCell>
        </MenuBar>

        <Header>
          <LogoBox>
            <svg width="170" height="89" viewBox="0 31 170 89" fontFamily={FONT} fontWeight="700" fill="#2e2e2e">
              <text x="5" y="83" fontSize="21.5" textLength="59" lengthAdjust="spacingAndGlyphs">SMS</text>
              <g fill="none" strokeWidth="1.9">
                <circle cx="78.8" cy="76" r="9.6" stroke="#d0202c" strokeDasharray="40 4 12.300 4" transform="rotate(20 78.8 76)" />
                <circle cx="78.8" cy="76" r="6.9" stroke="#2f7fc8" strokeDasharray="24 3 13.300 3" transform="rotate(120 78.8 76)" />
                <circle cx="78.8" cy="76" r="4.3" stroke="#d0202c" strokeDasharray="23 4" transform="rotate(-60 78.8 76)" />
              </g>
              <circle cx="78.8" cy="76" r="2.6" />
              <text x="94" y="83" fontSize="22" textLength="70" lengthAdjust="spacingAndGlyphs">group</text>
            </svg>
          </LogoBox>
          <Banner />
          <Sdi>
            <svg width="128" height="89" viewBox="1669 31 128 89">
              <path d="M1728 46h17l28 28.5-28 28.5h-17l27-28.5Z" fill="#b5040f" />
              <text transform="translate(1720.8 70) rotate(-45)" textAnchor="middle" y="8" fontFamily={FONT} fontWeight="700" fontSize="23" stroke="#000" strokeWidth="1" textLength="35" lengthAdjust="spacingAndGlyphs">SDI</text>
            </svg>
          </Sdi>
          <Clock>
            <span>Monday</span>
            <span>2021-01-04</span>
            <Time>09:47:33</Time>
          </Clock>
        </Header>

        <Crumbs>
          <Back w={29}>
            <svg width="20" height="26" viewBox="0 0 20 26"><path d="M12 1h6L8.5 13 18 25h-6L1.5 13Z" fill="#ddd" /></svg>
          </Back>
          <Back w={33} />
          <Crumb w={45} pad={9}>
            <svg width="26" height="26" viewBox="0 0 26 26" fill="#ccc">
              <path d="M13 1 0 14l1.5 1.5L13 4l11.5 11.5L26 14l-4-4V3h-3.5v3.5Z" />
              <path d="M3 15.5 13 5.8l10 9.7V25h-6.5v-8h-7v8H3Z" />
              <path d="M10 11.5h6v3h-6Z" fill="#4a4a4a" />
            </svg>
          </Crumb>
          <Chevron />
          <Crumb w={126} pad={9}>Finishing Mill</Crumb>
          <Chevron />
          <Crumb w={125} pad={9}>Maintenance</Crumb>
          <Chevron />
          <Crumb w={43} pad={9}>F6</Crumb>
          <Chevron />
          <Crumb w={81} pad={9} strong>Stand</Crumb>
          <Pills>
            <Pill w={64} gap={12}>RM<svg width="2" height="1" /><Warn size={19} /></Pill>
            <Pill w={64} gap={11}>DC<svg width="2" height="1" /><Warn size={19} /></Pill>
            <Pill w={64} gap={195}>CC<svg width="2" height="1" /><Warn size={19} /></Pill>
            <Pill w={220} gap={13} end>
              <Segs>{["#d00", GREEN, "#d00", "#2b2b2b"].map((c, i) => <Seg key={i} c={c} />)}</Segs><Down c="#eee" />
            </Pill>
            <Pill w={150} gap={12} end>
              Func. Stop<Segs>{[GREEN, GREEN, GREEN, GREEN, "#2b2b2b"].map((c, i) => <Seg key={i} c={c} />)}</Segs><Down c="#eee" />
            </Pill>
            <Pill w={108} gap={12} end>
              Safety<Segs ml={10}>{[1, 2, 3].map((i) => <Seg key={i} c="#d80000" />)}</Segs><Down c="#eee" />
            </Pill>
          </Pills>
        </Crumbs>

        <Main>
          <Panel w={341} h={571} lit>
            <Legend><Lamp on />HGC</Legend>
            <Split>
              <IconButton><Gear s={29} /></IconButton>
              <Grow>
                <Body>
                  <SideHeads />
                  <Line label="Position ES" unit="[mm]" v={["46.63", "46.63"]} />
                  <Line label="Position XS" unit="[mm]" v={["46.63", "46.63"]} />
                </Body>
              </Grow>
            </Split>
            <Body>{hgcLines.map((l) => <Line key={l.label} {...l} />)}</Body>
          </Panel>

          <Middle>
            <MillRow>
              <Mill />
              <RightStack>
                <Panel w={359} h={109} ml={46}>
                  <Legend>MDC</Legend>
                  <Body pt={3}>
                    <Line label="Act. Torque" unit="[kNm]" v={["0.0"]} uw={45} cw={73} ml={9} />
                    <Line label="Act. Lin. Speed" unit="[m/s]" v={["0.0"]} uw={45} cw={73} ml={9} />
                    <Line label="Act. Rotational Speed" unit="[rpm]" v={["0"]} uw={45} cw={73} ml={9} uup={1} />
                  </Body>
                </Panel>
                <Split mt={6}>
                  <Drive />
                  <Panel w={232} h={156}>
                    <Legend><Lamp on />HGC</Legend>
                    <Head h={8}><Label mr={43} up={-3}>Grp1</Label><Label mr={1} up={-3}>Grp2</Label></Head>
                    <Body pt={7} pr={6}>
                      {([["Piston Chk. Valve", true, false], ["Rod Check Valve", null, true], ["HGC Relief Valve", null, false], ["HGC Filter Clogged", null, true]] as [string, boolean | null, boolean][]).map(([t, a, b]) => (
                        <Row key={t} h={30} pb={0}>
                          <Label up={1}>{t}</Label>
                          <Cells w={90} ml={10} gap={56}>
                            {a === null ? <svg width="17" height="1" /> : <Lamp on={a} />}
                            <Lamp on={b} />
                          </Cells>
                        </Row>
                      ))}
                    </Body>
                  </Panel>
                </Split>
                <Panel w={359} h={77} ml={46} mt={6}>
                  <Legend gap={4}><Lamp on />SGC</Legend>
                  <Split>
                    <DetailsBtn><BtnText>Details</BtnText><ArrowRight /></DetailsBtn>
                    <Grow>
                      <Body pt={2}>
                        <Line label="Total Gap Ref." unit="[mm]" v={["1937"]} tone="ref" uw={40} cw={73} ml={9} up={0} />
                        <Line label="Total Gap Act." unit="[mm]" v={["1937"]} uw={40} cw={73} ml={9} up={0} />
                      </Body>
                    </Grow>
                  </Split>
                </Panel>
                <GapBox>
                  <span>[mm]</span>
                  <Cells><Value tone="ref">1500</Value><Value>1500</Value></Cells>
                </GapBox>
              </RightStack>
            </MillRow>
            <Panel w={775} h={157} lit>
              <Legend><Lamp on />CVC</Legend>
              <CvcCols>
                <CvcCol w={112} pl={16}>
                  <LampRow><Lamp dim />Force Up</LampRow>
                  <LampRow><Lamp dim />Force Down</LampRow>
                </CvcCol>
                <CvcCol w={154} pl={16}>
                  <LampRow g={6}><Lamp dim />BIR In Roll Change</LampRow>
                  <LampRow g={6}><Lamp on />In Calibration</LampRow>
                  <LampRow g={6}><Lamp on />In Roll Change</LampRow>
                  <LampRow g={6}><Lamp on />In Setup</LampRow>
                </CvcCol>
                <CvcCol w={127} pl={16}>
                  {["TWR Entry", "TWR Exit", "BWR Entry", "BWR Exit"].map((t) => <LampRow key={t}><Lamp />{t}</LampRow>)}
                </CvcCol>
                <CvcTable>
                  {[["Servo", "[%]"], ["Servo", "[%]"], ["Pos.", "[mm]"], ["Rod", "[bar]"], ["Piston", "[bar]"]].map(([a, b], i) => (
                    <ColHead key={i}><span>{a}</span><span>{b}</span></ColHead>
                  ))}
                  {cvcRows.flatMap((r, y) => r.map((v, x) => <Value key={`${y}-${x}`} tone={x === 0 ? "ref" : undefined}>{v}</Value>))}
                </CvcTable>
              </CvcCols>
            </Panel>
          </Middle>

          <Panel w={354} h={426} ml={5} lit>
            <Legend><Lamp on />BRB</Legend>
            <Body pt={168} pr={4}>
              {balLines.map((l) => <Line key={l.label} {...l} h={30} pb={0} up={6} />)}
              <Line label="Balanced" v={[true]} h={28} pb={0} ml={12} up={0} />
              <Line label="Lifted" v={[false]} h={32} pb={1} ml={12} up={2} />
              <Line label="Lowered" v={[false]} h={28} pb={1} ml={12} up={2} />
            </Body>
          </Panel>

          <Panel w={355} h={450} ml={8} lit>
            <Legend><Lamp on />WRB</Legend>
            <Body pr={4}>
              <SideHeads />
              {wrbLines.map((l) => <Line key={l.label} {...l} />)}
              <Row h={26} pb={1}>
                <Label up={-4}>Rod Pressure</Label>
                <Unit up={-4}>[bar]</Unit>
                <Cells><Value>+40.0</Value></Cells>
              </Row>
              <Line label="Rod Pressure Valve On" v={[true]} h={30} pb={1} up={-8} />
              <Line label="Balanced" v={[true]} h={30} pb={0} up={0} />
              <Line label="Lifted" v={[true]} h={30} pb={0} up={0} />
              <Line label="Lowered" v={[false]} h={30} pb={1} up={1} />
            </Body>
          </Panel>
        </Main>

        <Lower>
          <LowPanel title="CVC  [mm]" w={137} tl={5}>
            <svg width="135" height="91" viewBox="19 779 135 91">
              <defs>
                <pattern id="dots" width="4" height="4" patternUnits="userSpaceOnUse">
                  <rect width="4" height="4" fill="#ff9a33" />
                  <rect width="1" height="1" fill="#9b7a50" />
                  <rect x="2" y="2" width="1" height="1" fill="#9b7a50" />
                </pattern>
              </defs>
              <path d="M41.5 826C66 836 82 822 105 823.5 118 824 124 828 131.5 826V834C118 828 104 831 92 835 74 840 56 838 41.5 834Z" fill="#eee" />
              <path d="M56 829.5C74 831 88 823.5 105 823.5L117 824.5V833C104 830 92 835 80 837.5 72 838.5 62 838 56 837Z" fill="url(#dots)" />
              <path d="M41.5 804C52 801 66 800.5 78 803 96 807 112 810 131.5 804.5V826.5C124 826 116 823.5 105 823.5 86 825 76 830 62 829.5 52 829 46 827 41.5 826Z" fill="#404040" stroke="#111" />
              <path d="M41.5 834C52 838 64 839 78 836 92 832 104 829 131.5 835V857C118 860.5 104 861 92 857.5 76 853 58 851 41.5 857Z" fill="#404040" stroke="#111" />
              <path d="M41.5 790V870M131.5 790V870" stroke="#000" strokeDasharray="7 2 2 2" />
            </svg>
            <CvcSides><span>OS</span><span>DS</span></CvcSides>
            <CvcVals>
              <span>Top</span><Small>0.0</Small>
              <span>Bot</span><Small>0.0</Small>
            </CvcVals>
          </LowPanel>

          <LowPanel title="CVC Positioning  [mm]" w={210} ml={19} tl={6}>
            <Gauge>
              <ScaleCol ml={16} labels={[[813, "+150"], [854, "+75"], [893, "0", 2], [916, "-75"], [956, "-150"]]} />
              <Bars bars={["TES", "TXS", "BES", "BXS"].map((head, i) => ({ head, ml: i ? 6 : 7, zero: true, ref: "+0.0", act: "+0.0" }))} />
            </Gauge>
          </LowPanel>

          <LowPanel title="Roll Force  [kN]" w={278} ml={19}>
            <Gauge>
              <ScaleCol five ml={24} w={32} minor={11} gap={11} labels={[[814, "50000"], [846, "40000"], [878, "30000"], [910, "20000"], [942, "10000"], [956, "0"]]} />
              <Bars bars={["OS", "DS", "Total"].map((head, i) => ({ head, ml: i ? 6 : 7, ref: "0", act: "0" }))} />
              <ScaleCol noRef ml={27} w={31} labels={[[813, "+2000"], [854, "+1000"], [893, "0", 5], [916, "-1000"], [956, "-2000"]]} />
              <Bars bars={[{ head: "Diff. DS-OS", ml: 7, zero: true, act: "+0", end: true, pr: 4 }]} />
            </Gauge>
          </LowPanel>

          <LowPanel title="Cylinder Pos.  [mm]" w={210} ml={19} tl={5}>
            <Gauge>
              <ScaleCol noRef ml={12} minor={11} labels={[[813, "180"], [854, "135"], [894, "90"], [934, "45"], [956, "0", 1]]} />
              <Bars up={1} bars={["EOS", "XOS", "EDS", "XOS"].map((head) => ({ head, ml: 7, act: "46.6", fill: cylFill, pr: 2 }))} />
            </Gauge>
          </LowPanel>

          <LowPanel title="Leveling  [mm]" w={125} ml={19}>
            <Gauge>
              <ScaleCol ml={12} gap={12} labels={[[813, "200"], [854, "100"], [893, "0", 3], [916, "-100"], [956, "-200"]]} />
              <Bars bars={[{ head: "OS-DS", ml: 7, zero: true, ref: "+0.0", act: "+0.0" }]} />
            </Gauge>
          </LowPanel>

          <LowPanel title="Gap  [mm]" w={91} ml={19}>
            <Gauge>
              <ScaleCol five ml={11} gap={11} labels={[[814, "100"], [846, "80"], [878, "60"], [910, "40"], [942, "20"], [956, "0", 2]]} />
              <Bars bars={[{ ml: 7, ref: "+10.0", act: "+10.0", fill: <><RefFill style={{ height: 16 }} /><Fill w={24} ml={1} cap={7} style={{ height: 16 }} /></> }]} />
            </Gauge>
          </LowPanel>

          <LowPanel title="Bending  [kN]" w={116} ml={19}>
            <Gauge>
              <ScaleCol ml={13} gap={11} labels={[[813, "2000"], [854, "1500"], [894, "1000"], [934, "500"], [956, "0", 2]]} />
              <Bars bars={[{ ml: 7, ref: "720", act: "720", fill: <><RefFill style={{ height: 57 }} /><Fill w={24} ml={1} cap={3} style={{ height: 57 }} /></> }]} />
            </Gauge>
          </LowPanel>

          <LowPanel title="Sequences" w={434} ml={19} h={211} tl={5}>
            <SeqGrid>
              {seqs.map(([t, on]) => (
                <SeqBtn key={t}>
                  <Auto>A</Auto>
                  <Lamp on={on} dim={!on} c={SKY} />
                  <SeqText>{t}</SeqText>
                  <ArrowRight />
                </SeqBtn>
              ))}
            </SeqGrid>
          </LowPanel>
        </Lower>

        <Alarm>
          <AlarmBtn><Side /><Bolt /><Side><Corner /></Side></AlarmBtn>
          <AlarmLine>
            <AlarmCell w={108} tight={0.1}>2021-01-04</AlarmCell>
            <AlarmCell w={115}>09:28:43</AlarmCell>
            <AlarmCell w={59}>+</AlarmCell>
            <AlarmCell w={1003} tight={0.46}>Header move. rel. - Warning run time limit switch negative</AlarmCell>
            <AlarmCell w={131}>FM</AlarmCell>
            <AlarmCell w={131} tight={0.3}>DCL</AlarmCell>
            <AlarmCell w={131}>21021389</AlarmCell>
            <AlarmCell w={177} tight={0.45}>N11NF001_YVH001</AlarmCell>
          </AlarmLine>
        </Alarm>

        <BottomBar>
          <BarBtn w={74} big>TF</BarBtn>
          <BarBtn w={74} big>RM</BarBtn>
          <BarBtn w={74} big>
            <svg width="22" height="25" viewBox="0 0 22 25">
              <path d="M1.5 1V24" stroke="#bbb" strokeWidth="1.6" />
              <path d="M3 2Q8-.5 12 2.5 16 4 21 1.5V12Q16 14.5 12 12.5 8 10 3 12.5Z" fill="#ccc" />
            </svg>
          </BarBtn>
          <BarBtn w={74} big>DC</BarBtn>
          <BarBtn w={74} big>CC</BarBtn>
          <BarGap w={4} />
          {["Shear", "Stand F1", "Stand F2", "Stand F3", "Stand F4", "Stand F5"].map((t) => <BarBtn key={t} w={128}>{t}</BarBtn>)}
          <BarBtn w={128} active>Stand F6</BarBtn>
          <BarBtn w={128}>{"Devices\nFM Exit"}</BarBtn>
          <BarGap w={287} />
          <BarBtn w={59}><Monitor split /></BarBtn>
          <BarBtn w={59}><Monitor /></BarBtn>
          <BarBtn w={59}><Camera /></BarBtn>
          <BarBtn w={59}><TaskCheck /></BarBtn>
        </BottomBar>

        <TimerWindow />
      </Screen>
    </>
  );
}
